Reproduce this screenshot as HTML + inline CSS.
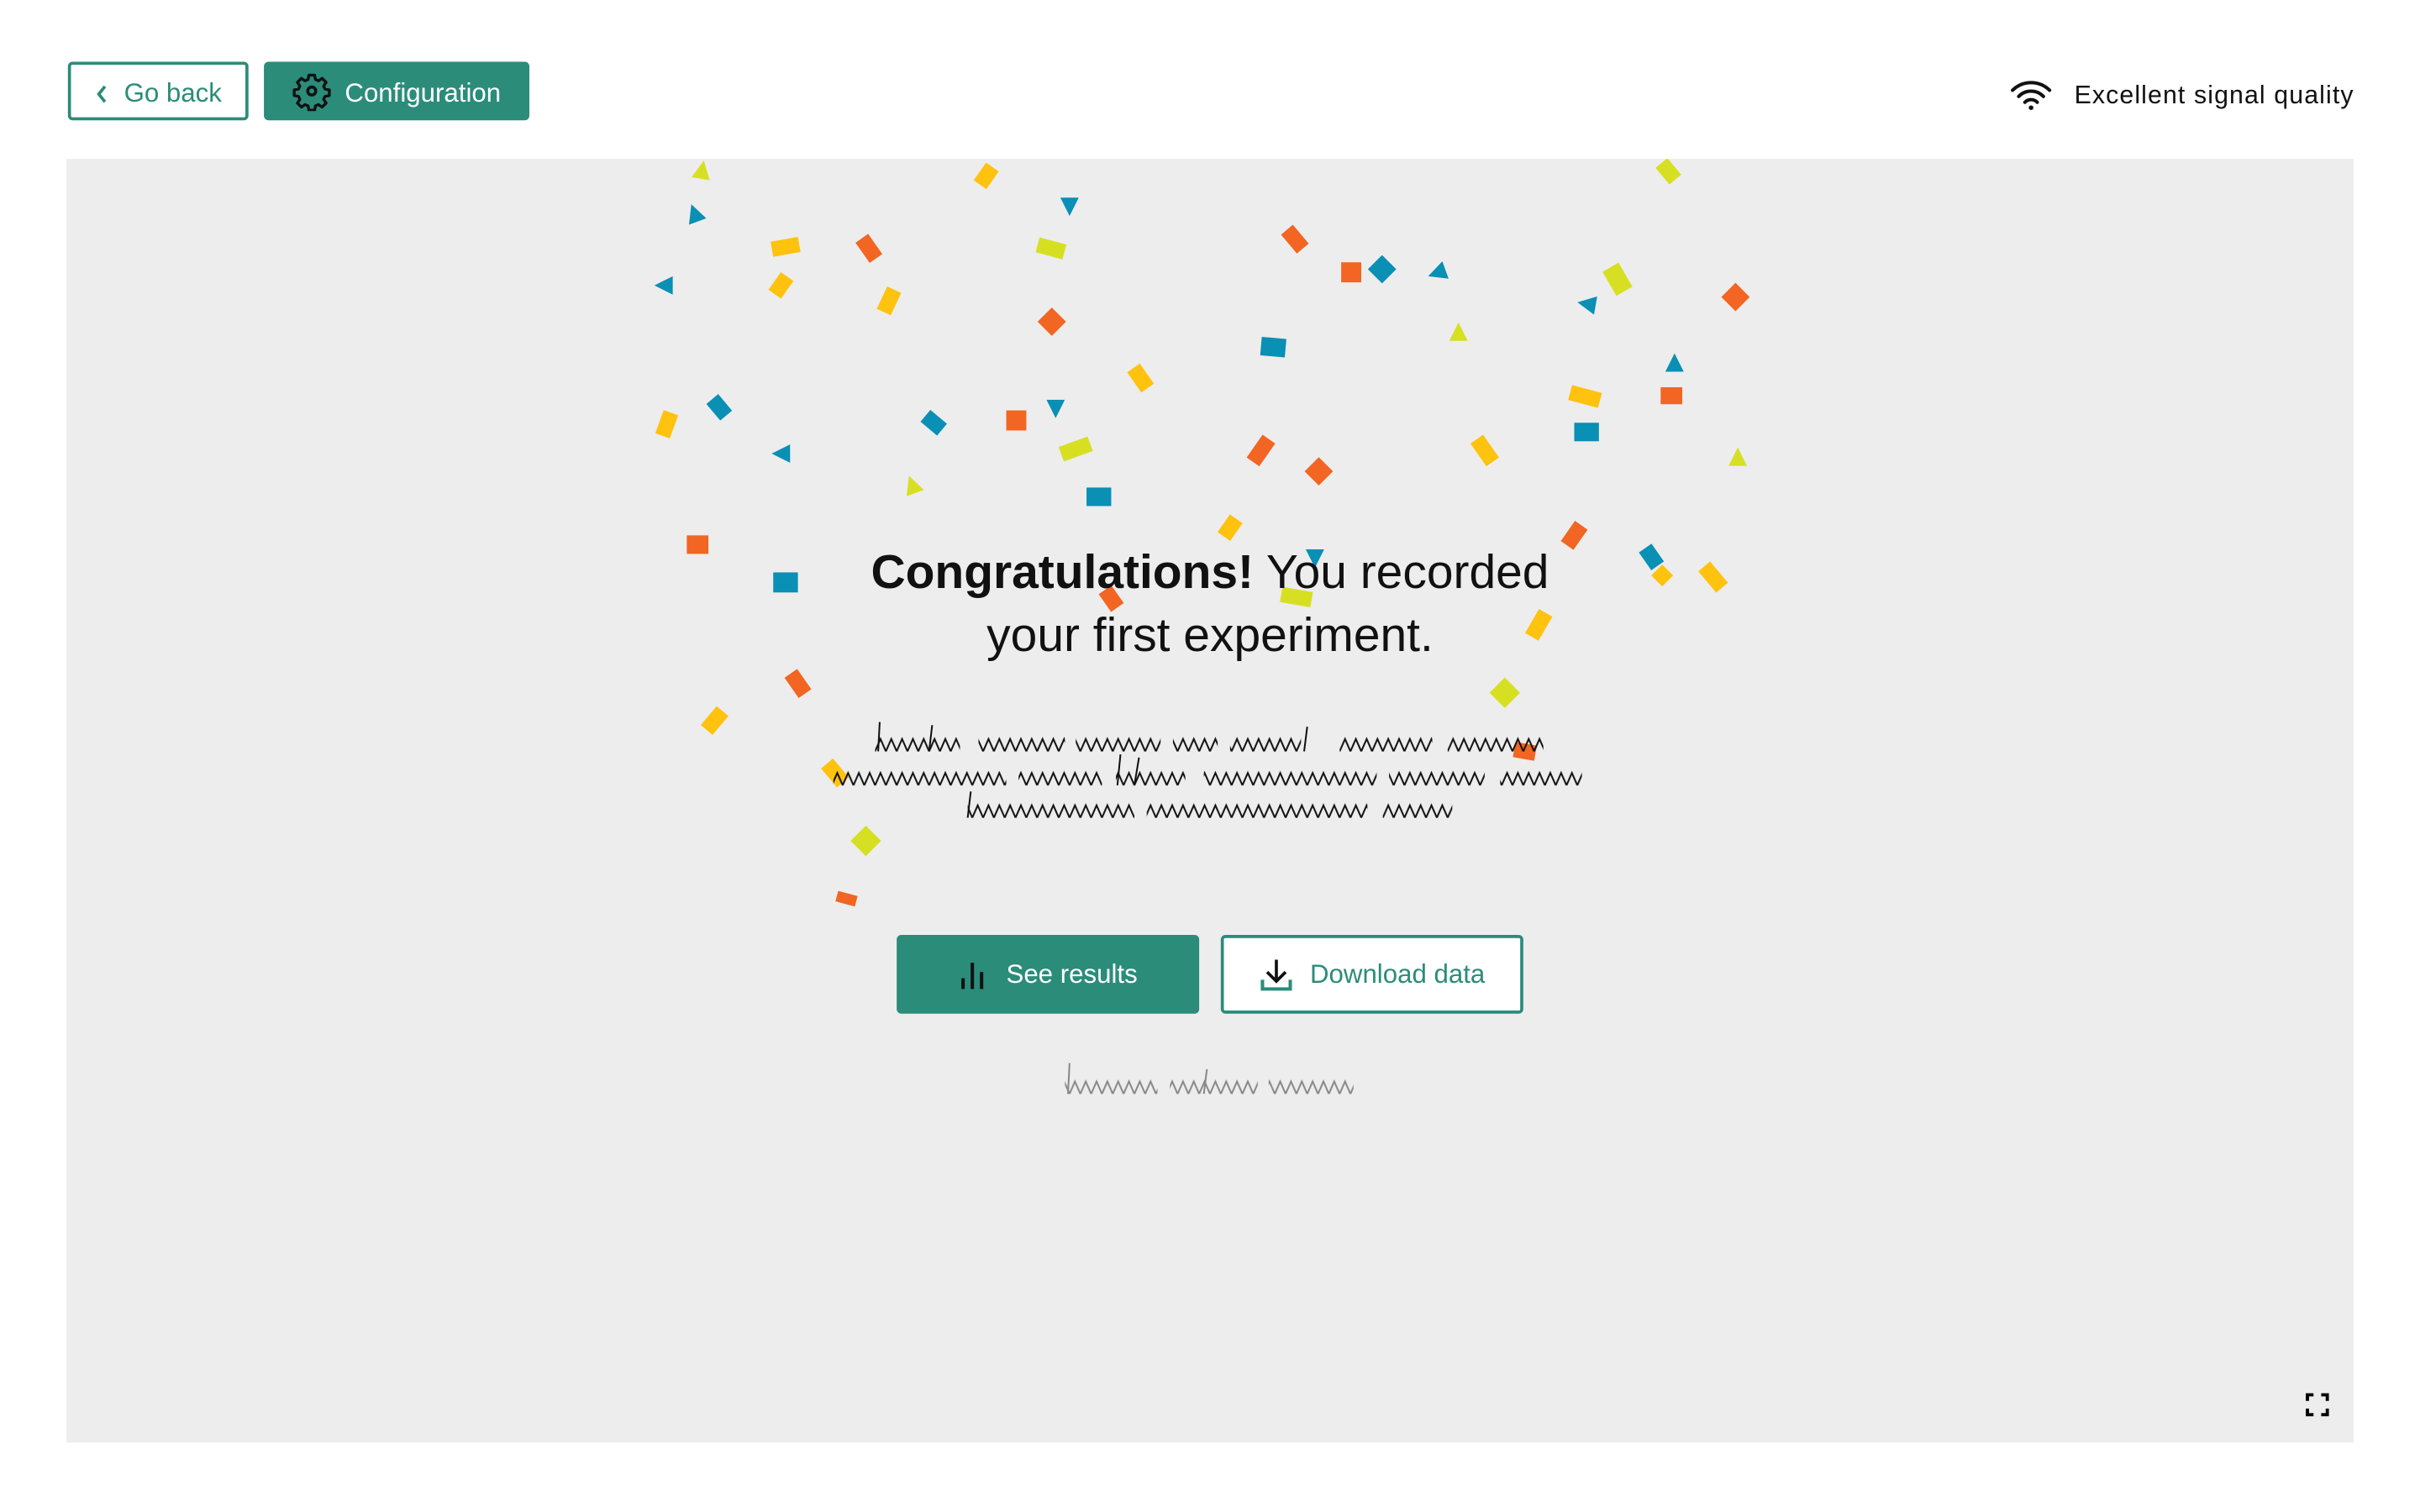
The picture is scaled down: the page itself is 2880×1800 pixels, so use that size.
<!DOCTYPE html>
<html><head><meta charset="utf-8">
<style>
html,body{margin:0;padding:0;width:2880px;height:1800px;overflow:hidden;background:#fff;}
#w{position:absolute;left:0;top:0;width:1568px;height:980px;transform:scale(1.83673);transform-origin:0 0;font-family:"Liberation Sans",sans-serif;}
.btn{position:absolute;box-sizing:border-box;display:flex;align-items:center;justify-content:center;font-size:16px;border-radius:3px;padding-top:3px;}
.panel{position:absolute;left:43px;top:103px;width:1482px;height:832px;background:#ededed;overflow:hidden;}
.c{position:absolute;width:14px;height:10px;}
.o{background:#f26522}.y{background:#ffc20e}.l{background:#d7df23}.b{background:#0a8fb5}
.t{clip-path:polygon(50% 0,100% 100%,0 100%);width:12px;height:12px;}
h1{position:absolute;left:0;width:1568px;top:350px;margin:0;text-align:center;font-weight:normal;font-size:31px;line-height:41px;color:#111;}
</style></head><body><div id="w">
<div class="btn" style="left:44px;top:40px;width:117px;height:38px;border:2px solid #2b8c7a;color:#2b8c7a;font-size:17px;">
<svg width="10" height="14" viewBox="0 0 10 14" style="margin-right:9px"><path d="M7 2L3 7l4 5" fill="none" stroke="#2b8c7a" stroke-width="2"/></svg>Go back</div>
<div class="btn" style="left:171px;top:40px;width:172px;height:38px;background:#2b8c7a;color:#fff;font-size:17px;">
<svg width="26" height="26" viewBox="0 0 24 24" style="margin-right:8px;margin-top:-3px"><path d="M10.3 2.5h3.4l.5 2.6 1.8.8 2.2-1.5 2.4 2.4-1.5 2.2.8 1.8 2.6.5v3.4l-2.6.5-.8 1.8 1.5 2.2-2.4 2.4-2.2-1.5-1.8.8-.5 2.6h-3.4l-.5-2.6-1.8-.8-2.2 1.5-2.4-2.4 1.5-2.2-.8-1.8-2.6-.5v-3.4l2.6-.5.8-1.8-1.5-2.2 2.4-2.4 2.2 1.5 1.8-.8z" fill="none" stroke="#111" stroke-width="1.7" stroke-linejoin="round"/><circle cx="12" cy="12" r="2.4" fill="none" stroke="#111" stroke-width="1.8"/></svg>Configuration</div>
<svg style="position:absolute;left:1302px;top:50px" width="28" height="22" viewBox="0 0 28 22"><path d="M2 8.5a17 17 0 0 1 24 0M6 12.5a11 11 0 0 1 16 0M10 16.3a5.5 5.5 0 0 1 8 0" fill="none" stroke="#111" stroke-width="2.2" stroke-linecap="round"/><circle cx="14" cy="19.8" r="1.5" fill="#111"/></svg>
<div style="position:absolute;left:1344px;top:53px;font-size:16.5px;color:#111;letter-spacing:0.6px">Excellent signal quality</div>
<div class="panel"></div>
<div style="position:absolute;left:43px;top:103px;width:1482px;height:832px;overflow:hidden">
<div style="position:absolute;left:-43px;top:-103px;width:1568px;height:980px">
<div class="c l t" style="left:449px;top:104px;transform:rotate(10deg)"></div>
<div class="c b t" style="left:444px;top:132px;transform:rotate(-20deg)"></div>
<div class="c y" style="left:632px;top:109px;transform:rotate(-55deg)"></div>
<div class="c b t" style="left:687px;top:128px;transform:rotate(180deg)"></div>
<div class="c y" style="left:500px;top:155px;transform:rotate(-10deg);width:18px"></div>
<div class="c o" style="left:555px;top:156px;transform:rotate(55deg);width:16px"></div>
<div class="c l" style="left:672px;top:156px;transform:rotate(15deg);width:18px"></div>
<div class="c b t" style="left:424px;top:179px;transform:rotate(-90deg)"></div>
<div class="c y" style="left:499px;top:180px;transform:rotate(-55deg)"></div>
<div class="c y" style="left:568px;top:190px;transform:rotate(-65deg);width:16px"></div>
<div class="c o" style="left:831px;top:150px;transform:rotate(50deg);width:16px"></div>
<div class="c o" style="left:869px;top:170px;width:13px;height:13px"></div>
<div class="c b" style="left:889px;top:168px;transform:rotate(45deg);width:13px;height:13px"></div>
<div class="c b t" style="left:925px;top:171px;transform:rotate(-110deg)"></div>
<div class="c l" style="left:1039px;top:175px;transform:rotate(60deg);width:18px;height:12px"></div>
<div class="c l" style="left:1074px;top:106px;transform:rotate(50deg)"></div>
<div class="c o" style="left:1118px;top:186px;transform:rotate(45deg);width:13px;height:13px"></div>
<div class="c b t" style="left:1022px;top:191px;transform:rotate(-80deg)"></div>
<div class="c o" style="left:675px;top:202px;transform:rotate(45deg);width:13px;height:13px"></div>
<div class="c l t" style="left:939px;top:209px"></div>
<div class="c b" style="left:817px;top:219px;transform:rotate(5deg);width:16px;height:12px"></div>
<div class="c y" style="left:731px;top:240px;transform:rotate(55deg);width:16px"></div>
<div class="c b t" style="left:1079px;top:229px"></div>
<div class="c y" style="left:1017px;top:252px;transform:rotate(15deg);width:20px"></div>
<div class="c o" style="left:1076px;top:251px;width:14px;height:11px"></div>
<div class="c y" style="left:424px;top:270px;transform:rotate(-70deg);width:16px"></div>
<div class="c b" style="left:459px;top:259px;transform:rotate(50deg)"></div>
<div class="c b" style="left:598px;top:269px;transform:rotate(40deg)"></div>
<div class="c o" style="left:652px;top:266px;width:13px;height:13px"></div>
<div class="c b t" style="left:678px;top:259px;transform:rotate(180deg)"></div>
<div class="c b t" style="left:500px;top:288px;transform:rotate(-90deg)"></div>
<div class="c l" style="left:687px;top:286px;transform:rotate(-20deg);width:20px"></div>
<div class="c o" style="left:808px;top:287px;transform:rotate(-55deg);width:18px"></div>
<div class="c o" style="left:848px;top:299px;transform:rotate(45deg);width:13px;height:13px"></div>
<div class="c y" style="left:953px;top:287px;transform:rotate(55deg);width:18px"></div>
<div class="c b" style="left:1020px;top:274px;width:16px;height:12px"></div>
<div class="c l t" style="left:1120px;top:290px"></div>
<div class="c l t" style="left:585px;top:308px;transform:rotate(-20deg)"></div>
<div class="c b" style="left:704px;top:316px;width:16px;height:12px"></div>
<div class="c y" style="left:790px;top:337px;transform:rotate(-55deg)"></div>
<div class="c o" style="left:1012px;top:342px;transform:rotate(-55deg);width:16px"></div>
<div class="c o" style="left:445px;top:347px;width:14px;height:12px"></div>
<div class="c b" style="left:501px;top:371px;width:16px;height:13px"></div>
<div class="c b t" style="left:846px;top:356px;transform:rotate(180deg)"></div>
<div class="c b" style="left:1063px;top:356px;transform:rotate(55deg)"></div>
<div class="c y" style="left:1072px;top:368px;transform:rotate(45deg);width:10px"></div>
<div class="c y" style="left:1101px;top:369px;transform:rotate(50deg);width:18px"></div>
<div class="c o" style="left:713px;top:383px;transform:rotate(55deg)"></div>
<div class="c l" style="left:830px;top:382px;transform:rotate(10deg);width:20px"></div>
<div class="c y" style="left:988px;top:400px;transform:rotate(-60deg);width:18px"></div>
<div class="c o" style="left:509px;top:438px;transform:rotate(55deg);width:16px"></div>
<div class="c l" style="left:968px;top:442px;transform:rotate(45deg);width:14px;height:14px"></div>
<div class="c y" style="left:455px;top:462px;transform:rotate(-50deg);width:16px"></div>
<div class="c y" style="left:533px;top:496px;transform:rotate(50deg);width:16px"></div>
<div class="c o" style="left:981px;top:482px;transform:rotate(10deg)"></div>
<div class="c l" style="left:554px;top:538px;transform:rotate(45deg);width:14px;height:14px"></div>
<div class="c o" style="left:542px;top:579px;transform:rotate(15deg);width:13px;height:7px"></div>
</div></div>
<h1><b>Congratulations!</b> You recorded<br>your first experiment.</h1>
<svg style="position:absolute;left:0;top:0" width="1568" height="980" viewBox="0 0 1568 980">
<defs>
<pattern id="z" width="7" height="12" patternUnits="userSpaceOnUse"><path d="M0 11L3.5 3L7 11" stroke="#111" stroke-width="1.1" fill="none"/></pattern>
<pattern id="g" width="7" height="12" patternUnits="userSpaceOnUse"><path d="M0 11L3.5 3L7 11" stroke="#888" stroke-width="1.1" fill="none"/></pattern>
</defs>
<g fill="url(#z)" transform="translate(0,476)">
<rect x="567" y="0" width="55" height="12"/><rect x="634" y="0" width="56" height="12"/><rect x="697" y="0" width="55" height="12"/><rect x="760" y="0" width="29" height="12"/><rect x="797" y="0" width="46" height="12"/><rect x="868" y="0" width="60" height="12"/><rect x="938" y="0" width="62" height="12"/>
</g>
<g fill="url(#z)" transform="translate(0,498)">
<rect x="540" y="0" width="112" height="12"/><rect x="660" y="0" width="54" height="12"/><rect x="723" y="0" width="45" height="12"/><rect x="780" y="0" width="112" height="12"/><rect x="900" y="0" width="62" height="12"/><rect x="972" y="0" width="53" height="12"/>
</g>
<g fill="url(#z)" transform="translate(0,519)">
<rect x="627" y="0" width="108" height="12"/><rect x="743" y="0" width="143" height="12"/><rect x="896" y="0" width="45" height="12"/>
</g>
<path d="M569 487l1-19M602 487l2-17M724 509l2-20M735 509l3-18M627 530l2-17M845 487l2-16" stroke="#111" stroke-width="1.1"/>
<g fill="url(#g)" transform="translate(0,698)">
<rect x="690" y="0" width="60" height="12"/><rect x="758" y="0" width="57" height="12"/><rect x="822" y="0" width="55" height="12"/>
</g>
<path d="M692 709l1-20M780 709l2-16" stroke="#888" stroke-width="1.1"/>
</svg>
<div class="btn" style="left:581px;top:606px;width:196px;height:51px;background:#2b8c7a;color:#fff;font-size:17px;padding-top:0">
<svg width="18" height="22" viewBox="0 0 18 22" style="margin-right:13px"><path d="M3 20v-7M9 20V3M15 20V9" stroke="#111" stroke-width="2.2" fill="none"/></svg>See results</div>
<div class="btn" style="left:791px;top:606px;width:196px;height:51px;border:2px solid #2b8c7a;background:#fff;color:#2b8c7a;font-size:17px;padding-top:0">
<svg width="22" height="22" viewBox="0 0 22 22" style="margin-right:11px"><path d="M11 1v14M5 9l6 6 6-6" stroke="#111" stroke-width="2" fill="none"/><path d="M2 14v6h18v-6" stroke="#2b8c7a" stroke-width="2.2" fill="none"/></svg>Download data</div>
<svg style="position:absolute;left:1494px;top:903px" width="15" height="15" viewBox="0 0 15 15"><path d="M1 5V1h4M10 1h4v4M14 10v4h-4M5 14H1v-4" stroke="#000" stroke-width="2.2" fill="none"/></svg>
</div></body></html>
